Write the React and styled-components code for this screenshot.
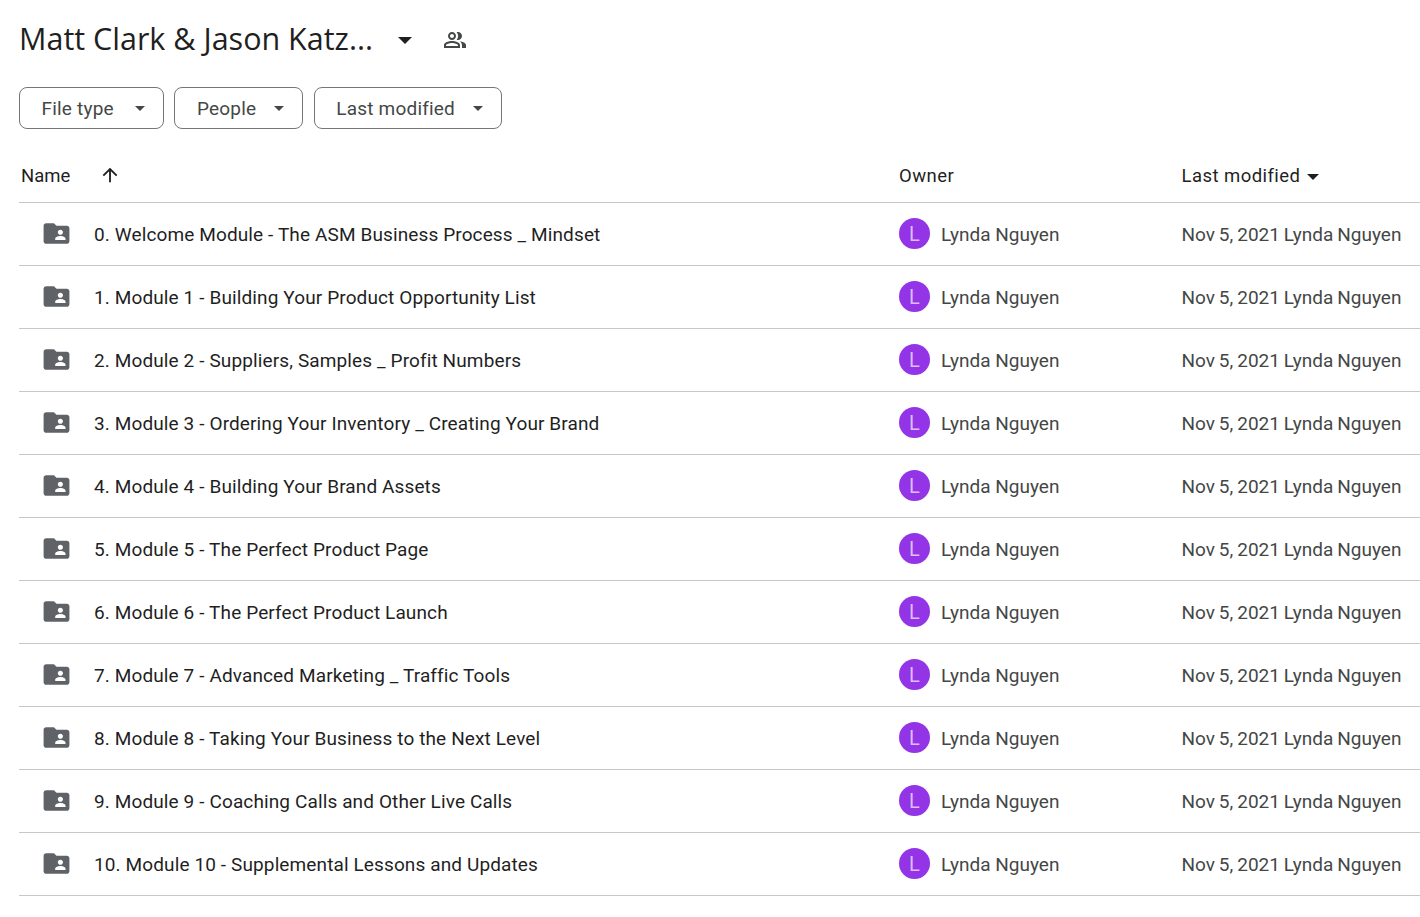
import React from "react";
import styled, { createGlobalStyle } from "styled-components";
import { MdArrowUpward, MdFolderShared, MdOutlinePeopleAlt } from "react-icons/md";

const modules = [
  "0. Welcome Module - The ASM Business Process _ Mindset",
  "1. Module 1 - Building Your Product Opportunity List",
  "2. Module 2 - Suppliers, Samples _ Profit Numbers",
  "3. Module 3 - Ordering Your Inventory _ Creating Your Brand",
  "4. Module 4 - Building Your Brand Assets",
  "5. Module 5 - The Perfect Product Page",
  "6. Module 6 - The Perfect Product Launch",
  "7. Module 7 - Advanced Marketing _ Traffic Tools",
  "8. Module 8 - Taking Your Business to the Next Level",
  "9. Module 9 - Coaching Calls and Other Live Calls",
  "10. Module 10 - Supplemental Lessons and Updates",
];

const GlobalStyle = createGlobalStyle`
  html, body {
    margin: 0;
    background: #fff;
    font-family: Roboto, "Liberation Sans", sans-serif;
    overflow: hidden;
  }
`;

const Page = styled.div`
  width: 1420px;
  height: 917px;
  padding-left: 19px;
  box-sizing: border-box;
`;

const TitleBar = styled.div`
  display: flex;
  align-items: center;
  height: 80px;
`;

const Title = styled.h1`
  margin: -4px 0 0;
  width: 379px;
  font-family: "Open Sans", sans-serif;
  font-size: 30.5px;
  font-weight: 400;
  letter-spacing: 0;
  color: #1f1f1f;
  white-space: nowrap;
`;

const Caret = styled.span`
  display: inline-block;
  width: 0;
  height: 0;
  flex: none;
  border-left: ${(p) => p.$size}px solid transparent;
  border-right: ${(p) => p.$size}px solid transparent;
  border-top: ${(p) => p.$size}px solid ${(p) => p.$color || "#1f1f1f"};
`;

const SharedIcon = styled(MdOutlinePeopleAlt)`
  margin-left: 31px;
  font-size: 24px;
  color: #444746;
`;

const Filters = styled.div`
  display: grid;
  grid-template-columns: 145px 129px 188px;
  column-gap: 10.4px;
  margin-top: 7px;
`;

const FilterButton = styled.button`
  display: flex;
  align-items: center;
  justify-content: space-between;
  height: 42px;
  padding: 0 18px 0 21.5px;
  box-sizing: border-box;
  background: #fff;
  border: 1px solid #747775;
  border-radius: 8px;
  font-family: Roboto, sans-serif;
  font-size: 19px;
  letter-spacing: 0.2px;
  color: #444746;
`;

const Row = styled.div`
  display: grid;
  grid-template-columns: 880px 282.5px 1fr;
  align-items: center;
  height: ${(p) => p.$height}px;
  border-bottom: 1px solid #c7c7c7;
  box-sizing: border-box;
`;

const HeaderRow = styled(Row)`
  margin-top: 21px;
  font-size: 18.5px;
  letter-spacing: 0.45px;
  color: #1f1f1f;
`;

const HeaderCell = styled.div`
  display: flex;
  align-items: center;
`;

const NameHeader = styled(HeaderCell)`
  padding-left: 2px;
  letter-spacing: 0;
`;

const SortArrow = styled(MdArrowUpward)`
  margin-left: 29px;
  font-size: 22px;
  margin-top: -2px;
`;

const HeaderCaret = styled(Caret)`
  margin-left: 7px;
  margin-top: 2px;
`;

const NameCell = styled.div`
  display: flex;
  align-items: center;
  padding-left: 22px;
`;

const FolderIcon = styled(MdFolderShared)`
  font-size: 31px;
  margin-bottom: 2px;
  color: #5f6368;
  flex: none;
`;

const FileName = styled.span`
  margin-left: 22px;
  font-size: 19px;
  letter-spacing: 0.12px;
  color: #1f1f1f;
  white-space: nowrap;
`;

const OwnerCell = styled.div`
  display: flex;
  align-items: center;
  gap: 11px;
`;

const Avatar = styled.span`
  display: flex;
  align-items: center;
  justify-content: center;
  width: 31px;
  height: 31px;
  margin-bottom: 1px;
  border-radius: 50%;
  background: #9334e6;
  color: #dcbdf8;
  font-size: 20px;
  font-weight: 400;
`;

const MutedText = styled.span`
  font-size: 19px;
  color: #444746;
  white-space: nowrap;
`;

const ModifiedText = styled(MutedText)`
  word-spacing: -0.8px;
`;

export default function App() {
  return (
    <Page>
      <GlobalStyle />
      <TitleBar>
        <Title>Matt Clark &amp; Jason Katz...</Title>
        <Caret $size={7} />
        <SharedIcon />
      </TitleBar>
      <Filters>
        <FilterButton>
          File type <Caret $size={5} $color="#444746" />
        </FilterButton>
        <FilterButton>
          People <Caret $size={5} $color="#444746" />
        </FilterButton>
        <FilterButton>
          Last modified <Caret $size={5} $color="#444746" />
        </FilterButton>
      </Filters>
      <HeaderRow $height={53}>
        <NameHeader>
          Name
          <SortArrow />
        </NameHeader>
        <HeaderCell>Owner</HeaderCell>
        <HeaderCell>
          Last modified
          <HeaderCaret $size={6.5} />
        </HeaderCell>
      </HeaderRow>
      {modules.map((name) => (
        <Row key={name} $height={63}>
          <NameCell>
            <FolderIcon />
            <FileName>{name}</FileName>
          </NameCell>
          <OwnerCell>
            <Avatar>L</Avatar>
            <MutedText>Lynda Nguyen</MutedText>
          </OwnerCell>
          <ModifiedText>Nov 5, 2021 Lynda Nguyen</ModifiedText>
        </Row>
      ))}
    </Page>
  );
}
